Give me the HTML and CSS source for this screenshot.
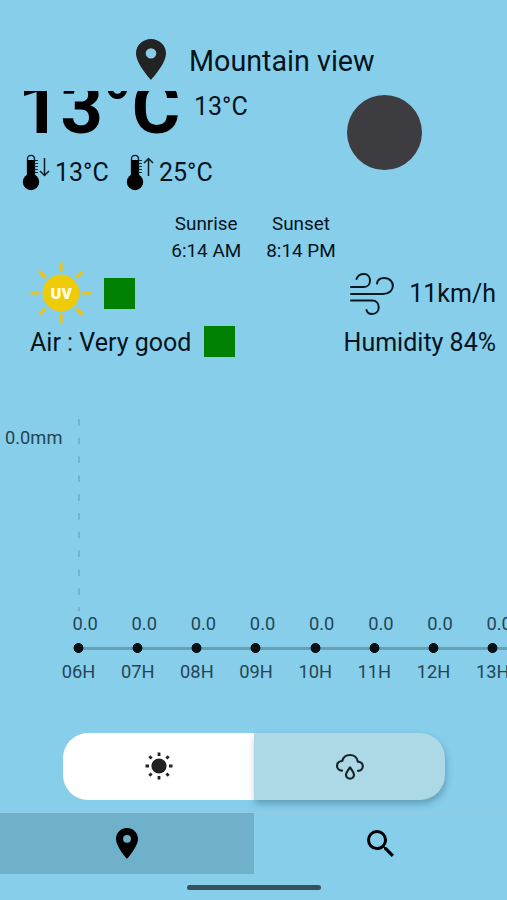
FILE: index.html
```html
<!DOCTYPE html>
<html lang="en">
<head>
<meta charset="utf-8">
<title>Weather</title>
<link rel="stylesheet" href="styles.css">
</head>
<body>
<div class="app">
  <header class="header">
    <svg class="header-pin" viewBox="5 2 14 20" width="30" height="41" preserveAspectRatio="none"><path fill="#232323" d="M12 2C8.13 2 5 5.13 5 9c0 5.25 7 13 7 13s7-7.75 7-13c0-3.87-3.13-7-7-7zm0 9.5a2.5 2.5 0 0 1 0-5 2.5 2.5 0 0 1 0 5z"/></svg>
    <h1 class="city">Mountain view</h1>
  </header>
  <section class="current">
    <div class="temps">
      <div class="now"><span class="big">13°C</span><span class="feels">13°C</span></div>
      <div class="range">
        <svg width="30" height="38" viewBox="0 0 30 38"><use href="#thermo"/><path d="M22.5 4v17.5M18 17l4.5 4.5 4.500-4.500" fill="none" stroke="#0b1c24" stroke-width="1.500"/></svg>
        <span class="low">13°C</span>
        <svg width="30" height="38" viewBox="0 0 30 38"><use href="#thermo"/><path d="M22.500 22V4.500M18 9l4.500-4.500L27 9" fill="none" stroke="#0b1c24" stroke-width="1.500"/></svg>
        <span class="high">25°C</span>
      </div>
    </div>
    <div class="moon"></div>
  </section>
  <section class="sun-times">
    <div><p>Sunrise</p><p>6:14 AM</p></div>
    <div><p>Sunset</p><p>8:14 PM</p></div>
  </section>
  <section class="details">
    <div class="detail-row uv-row">
      <svg class="uv" width="62" height="62" viewBox="-31 -31 62 62">
        <circle r="18.500" fill="#edcb08"/>
        <path stroke="#e8c51c" stroke-width="3.200" d="M0-30.500V-21M0 30.500V21M-30.500 0H-21M30.500 0H21M-21.500-21.500l6 6M21.500-21.500l-6 6M-21.500 21.500l6-6M21.500 21.500l-6-6"/>
        <text class="uv-text" x="0" y="6.200" text-anchor="middle">UV</text>
      </svg>
      <i class="level"></i>
      <svg class="wind" width="46" height="44" viewBox="0 0 46 44" fill="none" stroke="#07181f" stroke-width="2" stroke-linecap="round"><path d="M2 16h13c8 0 8-13 0-13-4 0-6.500 2-7.500 5M2 23h32c13 0 13-16 1-16-4 0-6.500 2-7 5.500M2 29.500h21c9 0 9 13.500 0 13.500-3 0-5-1.500-5.500-4"/></svg>
      <span class="speed">11km/h</span>
    </div>
    <div class="detail-row air-row">
      <span class="air">Air : Very good</span>
      <i class="level"></i>
      <span class="humidity">Humidity 84%</span>
    </div>
  </section>
  <section class="chart">
    <div class="plot"><span class="axis-label">0.0mm</span><svg class="axis" width="2" height="196"><path d="M1 0V192" stroke="#6faac3" stroke-width="1.500" stroke-dasharray="6.500 12.300"/></svg></div>
    <div class="hours">
      <div class="hour"><b>0.0</b><i></i><span>06H</span></div>
      <div class="hour"><b>0.0</b><i></i><span>07H</span></div>
      <div class="hour"><b>0.0</b><i></i><span>08H</span></div>
      <div class="hour"><b>0.0</b><i></i><span>09H</span></div>
      <div class="hour"><b>0.0</b><i></i><span>10H</span></div>
      <div class="hour"><b>0.0</b><i></i><span>11H</span></div>
      <div class="hour"><b>0.0</b><i></i><span>12H</span></div>
      <div class="hour"><b>0.0</b><i></i><span>13H</span></div>
    </div>
  </section>
  <div class="toggle">
    <div class="option selected"><svg width="28" height="28" viewBox="-14 -14 28 28"><circle r="7.600" fill="#222"/><path stroke="#222" stroke-width="2.800" d="M0-13.500v3.500M0 13.500V10M-13.500 0h3.500M13.500 0H10M-9.700-9.700l2.300 2.300M9.700-9.700L7.400-7.400M-9.700 9.700l2.300-2.300M9.700 9.700L7.400 7.400"/></svg></div>
    <div class="option rain"><svg width="30" height="28" viewBox="0 0 30 28" fill="none" stroke="#16252c" stroke-width="2.200" stroke-linecap="round" stroke-linejoin="round"><path d="M7 18.700C4 18.500 2 16.200 2 13.700c0-2.800 2.300-4.800 5.200-4.700C8.200 5 11.300 3 15 3c4 0 7.300 2.700 7.800 6.700 3.100 0 5 2 5 4.600s-1.900 4.500-4.800 4.500M15 15.300c-2 3-4 5-4 7.400 0 2.200 1.700 3.900 4 3.900s4-1.700 4-3.900c0-2.400-2-4.400-4-7.400z"/></svg></div>
  </div>
  <nav class="nav">
    <div class="tab active"><svg width="22" height="31" viewBox="5 2 14 20" preserveAspectRatio="none"><path d="M12 2C8.130 2 5 5.130 5 9c0 5.250 7 13 7 13s7-7.750 7-13c0-3.870-3.130-7-7-7zm0 9.500a2.500 2.500 0 0 1 0-5 2.500 2.500 0 0 1 0 5z"/></svg></div>
    <div class="tab"><svg width="27" height="27" viewBox="3 3 17.490 17.490"><path d="M15.500 14h-.79l-.28-.27A6.471 6.471 0 0 0 16 9.500 6.500 6.500 0 1 0 9.500 16c1.610 0 3.090-.59 4.230-1.570l.27.28v.79l5 4.990L20.490 19l-4.990-5zm-6 0C7.010 14 5 11.990 5 9.500S7.010 5 9.500 5 14 7.010 14 9.500 11.990 14 9.500 14z"/></svg></div>
  </nav>
  <div class="system-bar"><i></i></div>
</div>
<svg class="symbols" width="0" height="0"><defs><g id="thermo"><path d="M5.500 24V4.800a3.500 3.500 0 0 1 7 0v19" fill="#87ceeb" stroke="#07181f" stroke-width="1.300"/><path d="M5 6h8v20h-8z"/><circle cx="9" cy="28" r="8.200"/><path d="M12.500 6.500h3.500M12.500 9.500h3.500M12.500 12.500h3.500M12.500 15.500h3.500M12.500 18.500h3.500" stroke="#17303c" stroke-width="1.200"/></g></defs></svg>
</body>
</html>
```
FILE: styles.css
```css
* { box-sizing: border-box; }
body { margin: 0; background: #87ceeb; font-family: Roboto, sans-serif; color: #06141b; overflow: hidden; }
p, h1 { margin: 0; font-weight: 400; }
svg { display: block; flex: none; }
.app { width: 507px; height: 900px; display: flex; flex-direction: column; overflow: hidden; }
.app > * { flex: none; }
.header { height: 91px; padding: 39px 0 0 136px; display: flex; gap: 23px; }
.city { font-size: 28.700px; line-height: 45px; white-space: nowrap; }
.current { height: 113px; display: flex; justify-content: space-between; overflow: hidden; padding-right: 85px; }
.now { display: flex; height: 61px; padding-left: 18px; }
.big { font-size: 74px; font-weight: 700; line-height: 84px; margin-top: -25px; width: 176px; color: #000; }
.feels { font-size: 25px; line-height: 32px; }
.range { display: flex; padding: 2px 0 0 22px; font-size: 25px; line-height: 38px; }
.low { width: 74px; padding-left: 3px; }
.high { padding-left: 3px; }
.moon { width: 75px; height: 75px; border-radius: 50%; background: #3d3d41; margin-top: 4px; }
.sun-times { height: 58px; padding-top: 7px; display: flex; justify-content: center; gap: 25px; font-size: 18.900px; line-height: 26.500px; text-align: center; }
.details { height: 157px; font-size: 25px; }
.detail-row { display: flex; align-items: center; padding-right: 11px; }
.uv-row { height: 62px; padding-left: 30px; }
.uv-text { font: 800 15px "Open Sans", sans-serif; fill: #fffbe0; }
.level { width: 31px; height: 31px; background: #008000; flex: none; }
.uv-row .level { margin-left: 12px; }
.wind { margin-left: auto; }
.speed { margin-left: 14px; }
.air-row { height: 36px; padding-left: 30px; }
.air-row .level { margin-left: 13px; position: relative; top: -1px; }
.humidity { margin-left: auto; }
.chart { height: 314px; font-size: 18.300px; color: #254552; }
.plot { height: 193px; display: flex; }
.axis-label { width: 78px; padding: 8px 0 0 5px; line-height: 22px; }
.hours { display: flex; margin-left: 49px; width: 458px; overflow: hidden; }
.hour { width: 59.170px; flex: none; display: flex; flex-direction: column; align-items: center; line-height: 24px; }
.hour b { font-weight: 400; padding-left: 13px; }
.hour i { width: 100%; height: 24px; background: radial-gradient(circle at 29.500px 12px, #071015 4.600px, transparent 5.300px), linear-gradient(#6b9fb4, #6b9fb4) 0 10.500px / 100% 3px no-repeat; }
.hour:first-child i { background: radial-gradient(circle at 29.500px 12px, #071015 4.600px, transparent 5.300px), linear-gradient(#6b9fb4, #6b9fb4) 29.500px 10.500px / 30px 3px no-repeat; }
.toggle { display: flex; width: 382px; height: 67px; margin: 0 0 12px 63px; }
.option { width: 191px; display: flex; align-items: center; justify-content: center; padding-bottom: 1px; }
.selected { background: #fff; border-radius: 25px 0 0 25px; }
.rain { background: #add8e6; border-radius: 0 25px 25px 0; box-shadow: 1px 4px 7px rgba(0, 40, 60, .28); }
.nav { height: 62px; display: flex; border-top: 1px solid #94cbe1; }
.tab { flex: 1; display: flex; align-items: center; justify-content: center; }
.active { background: #6fb1cb; }
.system-bar { height: 26px; display: flex; justify-content: center; padding-top: 11px; }
.system-bar i { width: 134px; height: 5px; border-radius: 3px; background: #35515d; }
```
